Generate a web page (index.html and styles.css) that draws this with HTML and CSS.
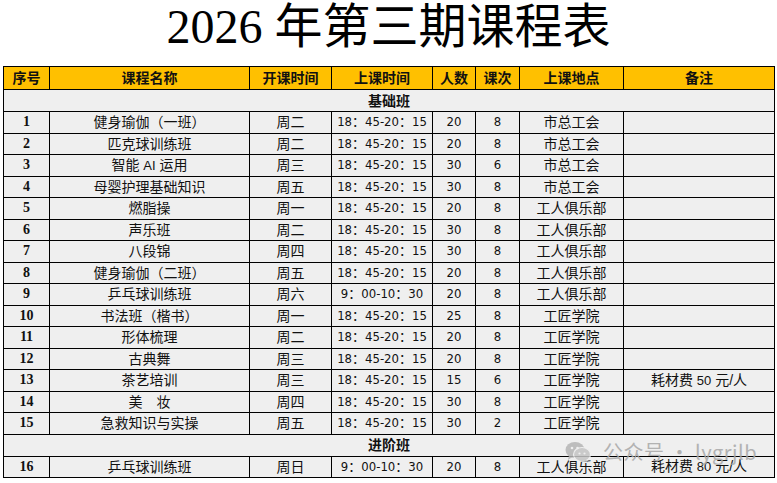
FILE: index.html
```html
<!DOCTYPE html>
<html lang="zh">
<head>
<meta charset="utf-8">
<title>2026 年第三期课程表</title>
<link rel="stylesheet" href="styles.css">
</head>
<body>
<div class="page">
  <h1 class="title">2026 年第三期课程表</h1>
  <table class="sched">
    <colgroup>
      <col class="c1"><col class="c2"><col class="c3"><col class="c4"><col class="c5"><col class="c6"><col class="c7"><col class="c8">
    </colgroup>
    <thead>
      <tr class="head">
        <th>序号</th><th>课程名称</th><th>开课时间</th><th>上课时间</th><th>人数</th><th>课次</th><th>上课地点</th><th>备注</th>
      </tr>
    </thead>
    <tbody>
      <tr class="section"><td colspan="8">基础班</td></tr>
      <tr><td class="no">1</td><td>健身瑜伽（一班）</td><td>周二</td><td class="num">18：45-20：15</td><td class="num">20</td><td class="num">8</td><td>市总工会</td><td></td></tr>
      <tr><td class="no">2</td><td>匹克球训练班</td><td>周二</td><td class="num">18：45-20：15</td><td class="num">20</td><td class="num">8</td><td>市总工会</td><td></td></tr>
      <tr><td class="no">3</td><td>智能 <span class="lat">AI</span> 运用</td><td>周三</td><td class="num">18：45-20：15</td><td class="num">30</td><td class="num">6</td><td>市总工会</td><td></td></tr>
      <tr><td class="no">4</td><td>母婴护理基础知识</td><td>周五</td><td class="num">18：45-20：15</td><td class="num">30</td><td class="num">8</td><td>市总工会</td><td></td></tr>
      <tr><td class="no">5</td><td>燃脂操</td><td>周一</td><td class="num">18：45-20：15</td><td class="num">20</td><td class="num">8</td><td>工人俱乐部</td><td></td></tr>
      <tr><td class="no">6</td><td>声乐班</td><td>周二</td><td class="num">18：45-20：15</td><td class="num">30</td><td class="num">8</td><td>工人俱乐部</td><td></td></tr>
      <tr><td class="no">7</td><td>八段锦</td><td>周四</td><td class="num">18：45-20：15</td><td class="num">30</td><td class="num">8</td><td>工人俱乐部</td><td></td></tr>
      <tr><td class="no">8</td><td>健身瑜伽（二班）</td><td>周五</td><td class="num">18：45-20：15</td><td class="num">20</td><td class="num">8</td><td>工人俱乐部</td><td></td></tr>
      <tr><td class="no">9</td><td>乒乓球训练班</td><td>周六</td><td class="num">9：00-10：30</td><td class="num">20</td><td class="num">8</td><td>工人俱乐部</td><td></td></tr>
      <tr><td class="no">10</td><td>书法班（楷书）</td><td>周一</td><td class="num">18：45-20：15</td><td class="num">25</td><td class="num">8</td><td>工匠学院</td><td></td></tr>
      <tr><td class="no">11</td><td>形体梳理</td><td>周二</td><td class="num">18：45-20：15</td><td class="num">20</td><td class="num">8</td><td>工匠学院</td><td></td></tr>
      <tr><td class="no">12</td><td>古典舞</td><td>周三</td><td class="num">18：45-20：15</td><td class="num">20</td><td class="num">8</td><td>工匠学院</td><td></td></tr>
      <tr><td class="no">13</td><td>茶艺培训</td><td>周三</td><td class="num">18：45-20：15</td><td class="num">15</td><td class="num">6</td><td>工匠学院</td><td>耗材费 <span class="lat">50</span> 元/人</td></tr>
      <tr><td class="no">14</td><td>美&emsp;妆</td><td>周四</td><td class="num">18：45-20：15</td><td class="num">30</td><td class="num">8</td><td>工匠学院</td><td></td></tr>
      <tr><td class="no">15</td><td>急救知识与实操</td><td>周五</td><td class="num">18：45-20：15</td><td class="num">30</td><td class="num">2</td><td>工匠学院</td><td></td></tr>
      <tr class="section"><td colspan="8">进阶班</td></tr>
      <tr><td class="no">16</td><td>乒乓球训练班</td><td>周日</td><td class="num">9：00-10：30</td><td class="num">20</td><td class="num">8</td><td>工人俱乐部</td><td>耗材费 <span class="lat">80</span> 元/人</td></tr>
    </tbody>
  </table>
  <div class="watermark">
    <svg class="wm-icon" width="26" height="22" viewBox="0 0 26 22" aria-hidden="true">
      <ellipse cx="10" cy="9" rx="9.5" ry="8" fill="#b5b5b5"/>
      <path d="M4 14 L3 19 L8 15.5 Z" fill="#b5b5b5"/>
      <ellipse cx="17" cy="13.5" rx="8.5" ry="7" fill="#c4c4c4" stroke="#efefef" stroke-width="1.2"/>
      <path d="M21 18.5 L23 21.5 L18 19.5 Z" fill="#c4c4c4"/>
      <circle cx="7" cy="7" r="1.3" fill="#efefef"/>
      <circle cx="12.5" cy="7" r="1.3" fill="#efefef"/>
      <circle cx="14.5" cy="12.5" r="1.1" fill="#efefef"/>
      <circle cx="19.5" cy="12.5" r="1.1" fill="#efefef"/>
    </svg>
    <span class="wm-text">公众号 · lygrjlb</span>
  </div>
</div>
</body>
</html>
```
FILE: styles.css
```css
html, body {
  margin: 0;
  padding: 0;
  background: #ffffff;
}
.page {
  position: relative;
  width: 777px;
  height: 483px;
  overflow: hidden;
}
.title {
  margin: 0;
  height: 66px;
  line-height: 54px;
  text-align: center;
  font-family: "Liberation Serif", "Noto Sans CJK SC", serif;
  font-weight: normal;
  font-size: 48px;
  color: #000;
}
.sched {
  margin-left: 3px;
  border-collapse: collapse;
  table-layout: fixed;
  width: 771px;
  font-family: "Liberation Sans", "Noto Sans CJK SC", sans-serif;
  font-size: 14px;
  color: #111;
}
.c1 { width: 46px; }
.c2 { width: 200px; }
.c3 { width: 82px; }
.c4 { width: 101px; }
.c5 { width: 43px; }
.c6 { width: 44px; }
.c7 { width: 104px; }
.c8 { width: 151px; }
.sched th, .sched td {
  border: 1px solid #000;
  padding: 0;
  text-align: center;
  vertical-align: middle;
  white-space: nowrap;
  overflow: hidden;
  line-height: 16px;
}
.sched tbody td {
  background: #efefef;
}
.head th {
  background: #ffc000;
  height: 22px;
  font-weight: bold;
  font-size: 14px;
}
.section td {
  height: 21px;
  font-weight: bold;
}
.sched tbody tr {
  height: 21.5px;
}
.no {
  font-family: "Liberation Serif", serif;
  font-weight: bold;
}
.num {
  font-size: 13px;
  font-family: "DejaVu Sans Condensed", "Liberation Sans", "Noto Sans CJK SC", sans-serif;
}
.lat {
  font-family: "Liberation Sans", sans-serif;
  font-size: 13px;
}
.watermark {
  position: absolute;
  left: 565px;
  top: 440px;
  display: flex;
  align-items: center;
  gap: 12px;
  opacity: 0.85;
}
.wm-text {
  font-family: "Noto Sans CJK SC", sans-serif;
  font-size: 20px;
  line-height: 24px;
  color: #a8a8a8;
  letter-spacing: 0.5px;
}
```
